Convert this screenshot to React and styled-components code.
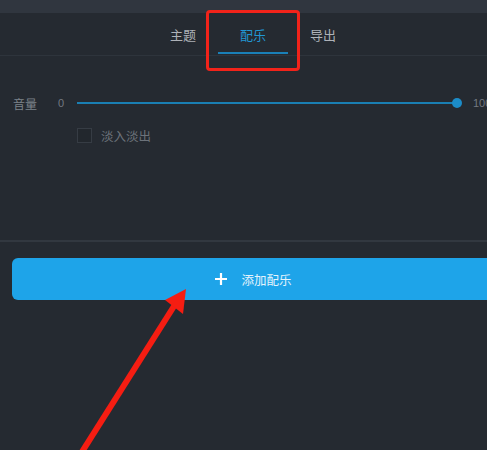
import React, { useState } from "react";
import styled, { createGlobalStyle } from "styled-components";

const Global = createGlobalStyle`
  html, body { margin: 0; padding: 0; background: #252a31; overflow: hidden; }
  body { font-family: "Noto Sans CJK SC", "Noto Sans", sans-serif; }
`;

const Viewport = styled.div`
  position: relative;
  width: 487px;
  height: 450px;
  overflow: hidden;
  background: #252a31;
`;

const Panel = styled.div`
  width: 506px;
  display: flex;
  flex-direction: column;
`;

const TopBar = styled.div`
  height: 13px;
  background: #30363f;
`;

const TabBar = styled.div`
  height: 42px;
  display: flex;
  justify-content: center;
  border-bottom: 1px solid #2e343c;
`;

const Tab = styled.div`
  position: relative;
  width: 70px;
  display: flex;
  align-items: center;
  justify-content: center;
  padding-top: 1px;
  font-size: 13px;
  color: ${(p) => (p.$active ? "#2197d4" : "#aeb2b8")};
  &::after {
    content: "";
    display: ${(p) => (p.$active ? "block" : "none")};
    position: absolute;
    left: 0;
    right: 0;
    bottom: 1px;
    height: 2px;
    background: #1a80b8;
  }
`;

const Content = styled.div`
  padding: 37px 0 0 13px;
  height: 147px;
  display: flex;
  flex-direction: column;
  gap: 12px;
`;

const Row = styled.div`
  display: flex;
  align-items: center;
  height: 20px;
`;

const Label = styled.span`
  width: 45px;
  font-size: 12px;
  color: #7d838b;
`;

const Num = styled.span`
  font-family: "Liberation Sans", Arial, sans-serif;
  font-size: 11px;
  color: #737981;
  width: ${(p) => p.$w || "auto"};
`;

const Track = styled.div`
  position: relative;
  width: 380px;
  height: 2px;
  margin: 0 16px 0 0;
  background: #1a7fb3;
`;

const Thumb = styled.div`
  position: absolute;
  right: -5px;
  top: -4px;
  width: 10px;
  height: 10px;
  border-radius: 50%;
  background: #1c8cc8;
`;

const CheckRow = styled.label`
  display: flex;
  align-items: center;
  gap: 9px;
  margin-left: 64px;
  height: 20px;
  cursor: pointer;
`;

const Box = styled.span`
  width: 13px;
  height: 13px;
  border: 1px solid #363c44;
  background: #22272d;
`;

const CheckText = styled.span`
  font-size: 12.5px;
  color: #6c727a;
`;

const Divider = styled.div`
  height: 2px;
  background: #323840;
`;

const ButtonWrap = styled.div`
  padding: 16px 12px 0 12px;
`;

const AddButton = styled.button`
  width: 100%;
  height: 42px;
  border: none;
  border-radius: 6px;
  background: #1ea4e9;
  display: flex;
  align-items: center;
  justify-content: center;
  gap: 13px;
  padding: 0;
  font-family: "Noto Sans CJK SC", sans-serif;
  font-size: 12.5px;
  color: #e4f3fc;
  cursor: pointer;
`;

const Highlight = styled.div`
  position: absolute;
  left: 206px;
  top: 10px;
  width: 88px;
  height: 55px;
  border: 3px solid #f2231a;
  border-radius: 4px;
  pointer-events: none;
`;

const Overlay = styled.svg`
  position: absolute;
  left: 0;
  top: 0;
  pointer-events: none;
`;

export default function App() {
  const [active, setActive] = useState(1);
  const [fade, setFade] = useState(false);
  const tabs = ["主题", "配乐", "导出"];
  return (
    <Viewport>
      <Global />
      <Panel>
        <TopBar />
        <TabBar>
          {tabs.map((t, i) => (
            <Tab key={t} $active={i === active} onClick={() => setActive(i)}>
              {t}
            </Tab>
          ))}
        </TabBar>
        <Content>
          <Row>
            <Label>音量</Label>
            <Num $w="19px">0</Num>
            <Track>
              <Thumb />
            </Track>
            <Num>100</Num>
          </Row>
          <CheckRow onClick={() => setFade(!fade)}>
            <Box />
            <CheckText>淡入淡出</CheckText>
          </CheckRow>
        </Content>
        <Divider />
        <ButtonWrap>
          <AddButton>
            <svg width="14" height="14" viewBox="0 0 14 14">
              <path d="M7 1v12M1 7h12" stroke="#ffffff" strokeWidth="2.2" />
            </svg>
            添加配乐
          </AddButton>
        </ButtonWrap>
      </Panel>
      <Highlight />
      <Overlay width="487" height="450" viewBox="0 0 487 450">
        <line x1="80" y1="455" x2="176" y2="303" stroke="#f51d12" strokeWidth="6" />
        <polygon points="165,300 186,289 183,314" fill="#f51d12" />
      </Overlay>
    </Viewport>
  );
}
